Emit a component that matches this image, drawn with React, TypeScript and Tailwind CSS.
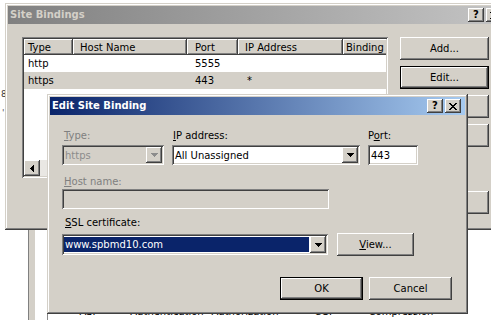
import React from "react";

const RAISED =
  "shadow-[inset_-1px_-1px_0_#404040,inset_1px_1px_0_#ffffff,inset_-2px_-2px_0_#808080,inset_2px_2px_0_#d4d0c8]";
const FRAME =
  "shadow-[inset_-1px_-1px_0_#404040,inset_1px_1px_0_#d4d0c8,inset_-2px_-2px_0_#808080,inset_2px_2px_0_#ffffff]";
const SUNKEN =
  "shadow-[inset_1px_1px_0_#808080,inset_-1px_-1px_0_#ffffff,inset_2px_2px_0_#404040,inset_-2px_-2px_0_#d4d0c8]";
const HEADER =
  "shadow-[inset_-1px_-1px_0_#404040,inset_1px_1px_0_#ffffff,inset_-2px_-2px_0_#808080]";

function DownArrow({ color = "#000000" }: { color?: string }) {
  return (
    <svg width="7" height="4" viewBox="0 0 7 4" shapeRendering="crispEdges">
      <path d="M0 0h7v1H0zM1 1h5v1H1zM2 2h3v1H2zM3 3h1v1H3z" fill={color} />
    </svg>
  );
}

function LeftArrow() {
  return (
    <svg width="4" height="7" viewBox="0 0 4 7" shapeRendering="crispEdges">
      <path d="M3 0h1v7H3zM2 1h1v5H2zM1 2h1v3H1zM0 3h1v1H0z" fill="#000000" />
    </svg>
  );
}

function XGlyph() {
  return (
    <svg width="8" height="7" viewBox="0 0 8 7" shapeRendering="crispEdges">
      <path
        d="M0 0h2v1H0zM6 0h2v1H6zM1 1h2v1H1zM5 1h2v1H5zM2 2h4v1H2zM3 3h2v1H3zM2 4h4v1H2zM1 5h2v1H1zM5 5h2v1H5zM0 6h2v1H0zM6 6h2v1H6z"
        fill="#000000"
      />
    </svg>
  );
}

function TitleBtn({ children, className = "" }: { children: React.ReactNode; className?: string }) {
  return (
    <div
      className={`w-[16px] h-[14px] shrink-0 bg-[#d4d0c8] flex items-center justify-center font-bold text-[10px] leading-none text-black ${RAISED} ${className}`}
    >
      {children}
    </div>
  );
}

function Btn({
  children,
  className = "",
  def = false,
}: {
  children: React.ReactNode;
  className?: string;
  def?: boolean;
}) {
  if (def) {
    return (
      <div className={`border border-black shrink-0 ${className}`}>
        <div className={`w-full h-full bg-[#d4d0c8] flex items-center justify-center ${RAISED}`}>{children}</div>
      </div>
    );
  }
  return (
    <div className={`bg-[#d4d0c8] shrink-0 flex items-center justify-center ${RAISED} ${className}`}>{children}</div>
  );
}

function ArrowBtn({ color = "#000000" }: { color?: string }) {
  return (
    <div className={`w-[16px] h-full shrink-0 bg-[#d4d0c8] flex items-center justify-center ${RAISED}`}>
      <DownArrow color={color} />
    </div>
  );
}

const COLS = [
  { w: "w-[49px]", hp: "pl-[4px]", rp: "pl-[4px]", label: "Type" },
  { w: "w-[114px]", hp: "pl-[7px]", rp: "pl-[7px]", label: "Host Name" },
  { w: "w-[51px]", hp: "pl-[8px]", rp: "pl-[8px]", label: "Port" },
  { w: "w-[105px]", hp: "pl-[7px]", rp: "pl-[9px]", label: "IP Address" },
  { w: "w-[60px]", hp: "pl-[3px]", rp: "pl-[3px]", label: "Binding" },
];

const ROWS = [
  { cells: ["http", "", "5555", "", ""], sel: false },
  { cells: ["https", "", "443", "*", ""], sel: true },
];

function ListView() {
  return (
    <div className={`w-[366px] h-[141px] shrink-0 bg-white p-[2px] flex flex-col ${SUNKEN}`}>
      <div className="flex h-[16px] shrink-0 overflow-hidden">
        {COLS.map((c) => (
          <div
            key={c.label}
            className={`${c.w} ${c.hp} shrink-0 h-full bg-[#d4d0c8] flex items-center whitespace-nowrap ${HEADER}`}
          >
            {c.label}
          </div>
        ))}
      </div>
      {ROWS.map((r, i) => (
        <div key={i} className={`flex h-[17px] shrink-0 overflow-hidden ${r.sel ? "bg-[#d4d0c8]" : ""}`}>
          {r.cells.map((t, j) => (
            <div key={j} className={`${COLS[j].w} ${COLS[j].rp} shrink-0 h-full flex items-center whitespace-nowrap`}>
              {t}
            </div>
          ))}
        </div>
      ))}
      <div className="flex-1" />
      <div className="h-[16px] shrink-0 flex">
        <div className={`w-[16px] h-full bg-[#d4d0c8] flex items-center justify-center ${RAISED}`}>
          <LeftArrow />
        </div>
        <div className="flex-1 bg-[#e9e7e3]" />
      </div>
    </div>
  );
}

export default function App() {
  return (
    <div className="relative w-[491px] h-[320px] overflow-hidden bg-white font-['DejaVu_Sans','Liberation_Sans',sans-serif] text-[10px] text-black">
      {/* background window behind the dialogs */}
      <div className="absolute inset-0">
        <span className="absolute left-[1px] top-[90px] text-[9px] leading-none text-[#333333]">8</span>
        <span className="absolute left-[2px] top-[109px] text-[9px] leading-none text-[#555555]">'</span>
        <div className="absolute left-[28px] top-[229px] w-[7px] h-[91px] bg-[#d4d0c8] border-l border-[#808080]" />
        <div className="absolute left-[47px] top-[300px] w-px h-[20px] bg-[#8a8a8a]" />
        <div className="absolute left-[50px] top-[305px] grid grid-cols-[78px_78px_78px_78px_78px] text-center leading-[13px] whitespace-nowrap">
          <span>ASP</span>
          <span>Authentication</span>
          <span>Authorization</span>
          <span>CGI</span>
          <span>Compression</span>
        </div>
      </div>

      {/* Site Bindings dialog (inactive) */}
      <div className={`absolute left-[5px] top-[3px] w-[502px] h-[227px] bg-[#d4d0c8] p-[3px] flex flex-col ${FRAME}`}>
        <div className="h-[18px] shrink-0 flex items-center pl-[2px] pr-[2px] bg-[linear-gradient(to_right,#808080,#c4c4c4)]">
          <span className="flex-1 font-bold text-[#d4d0c8] leading-none">Site Bindings</span>
          <TitleBtn>?</TitleBtn>
          <TitleBtn className="ml-[2px]">
            <XGlyph />
          </TitleBtn>
        </div>
        <div className="flex pl-[14px] pt-[13px]">
          <ListView />
          <div className="ml-[12px] flex flex-col">
            <Btn className="w-[89px] h-[23px]">Add...</Btn>
            <Btn def className="mt-[6px] w-[89px] h-[23px]">
              Edit...
            </Btn>
            <Btn className="mt-[6px] w-[89px] h-[23px]">Remove</Btn>
            <Btn className="mt-[6px] w-[89px] h-[23px]">Browse</Btn>
            <Btn className="mt-[44px] w-[89px] h-[23px]">Close</Btn>
          </div>
        </div>
      </div>

      {/* Edit Site Binding dialog (active) */}
      <div className={`absolute left-[47px] top-[94px] w-[421px] h-[220px] bg-[#d4d0c8] p-[3px] flex flex-col ${FRAME}`}>
        <div className="h-[18px] shrink-0 flex items-center pl-[2px] pr-[4px] bg-[linear-gradient(to_right,#0a246a,#a6caf0)]">
          <span className="flex-1 font-bold text-white leading-none">Edit Site Binding</span>
          <TitleBtn>?</TitleBtn>
          <TitleBtn className="ml-[2px]">
            <XGlyph />
          </TitleBtn>
        </div>

        <div className="flex flex-col pl-[12px] pt-[14px] leading-[13px]">
          {/* row 1 */}
          <div className="flex gap-[8px]">
            <div className="flex flex-col gap-[3px]">
              <span className="pl-[2px] text-[#808080]">
                <span className="underline">T</span>ype:
              </span>
              <div className={`w-[102px] h-[20px] bg-[#d4d0c8] p-[2px] flex ${SUNKEN}`}>
                <span className="flex-1 pl-[1px] flex items-center text-[#8c8c8c]">https</span>
                <ArrowBtn color="#8c8c8c" />
              </div>
            </div>
            <div className="flex flex-col gap-[3px]">
              <span className="pl-[1px]">
                <span className="underline">I</span>P address:
              </span>
              <div className={`w-[188px] h-[20px] bg-white p-[2px] flex ${SUNKEN}`}>
                <span className="flex-1 pl-[1px] flex items-center">All Unassigned</span>
                <ArrowBtn />
              </div>
            </div>
            <div className="flex flex-col gap-[3px]">
              <span>
                P<span className="underline">o</span>rt:
              </span>
              <div className={`w-[50px] h-[20px] bg-white p-[2px] flex items-center ${SUNKEN}`}>
                <span className="pl-[1px]">443</span>
              </div>
            </div>
          </div>

          {/* row 2 */}
          <div className="mt-[10px] flex flex-col gap-[1px]">
            <span className="pl-[2px] text-[#808080]">
              <span className="underline">H</span>ost name:
            </span>
            <div className={`w-[267px] h-[20px] bg-[#d4d0c8] ${SUNKEN}`} />
          </div>

          {/* row 3 */}
          <div className="mt-[7px] flex flex-col gap-[4px]">
            <span className="pl-[3px]">
              <span className="underline">S</span>SL certificate:
            </span>
            <div className="flex items-center gap-[9px]">
              <div className={`w-[266px] h-[21px] bg-white p-[2px] flex ${SUNKEN}`}>
                <div className="flex-1 my-[1px] mr-[1px] bg-[#0a246a] text-white flex items-center pl-[1px]">
                  www.spbmd10.com
                </div>
                <ArrowBtn />
              </div>
              <Btn className="w-[77px] h-[23px]">
                <span>
                  <span className="underline">V</span>iew...
                </span>
              </Btn>
            </div>
          </div>

          {/* row 4 */}
          <div className="mt-[21px] flex justify-end gap-[6px] pr-[13px]">
            <Btn def className="w-[83px] h-[23px]">
              OK
            </Btn>
            <Btn className="w-[83px] h-[23px]">Cancel</Btn>
          </div>
        </div>
      </div>
    </div>
  );
}
